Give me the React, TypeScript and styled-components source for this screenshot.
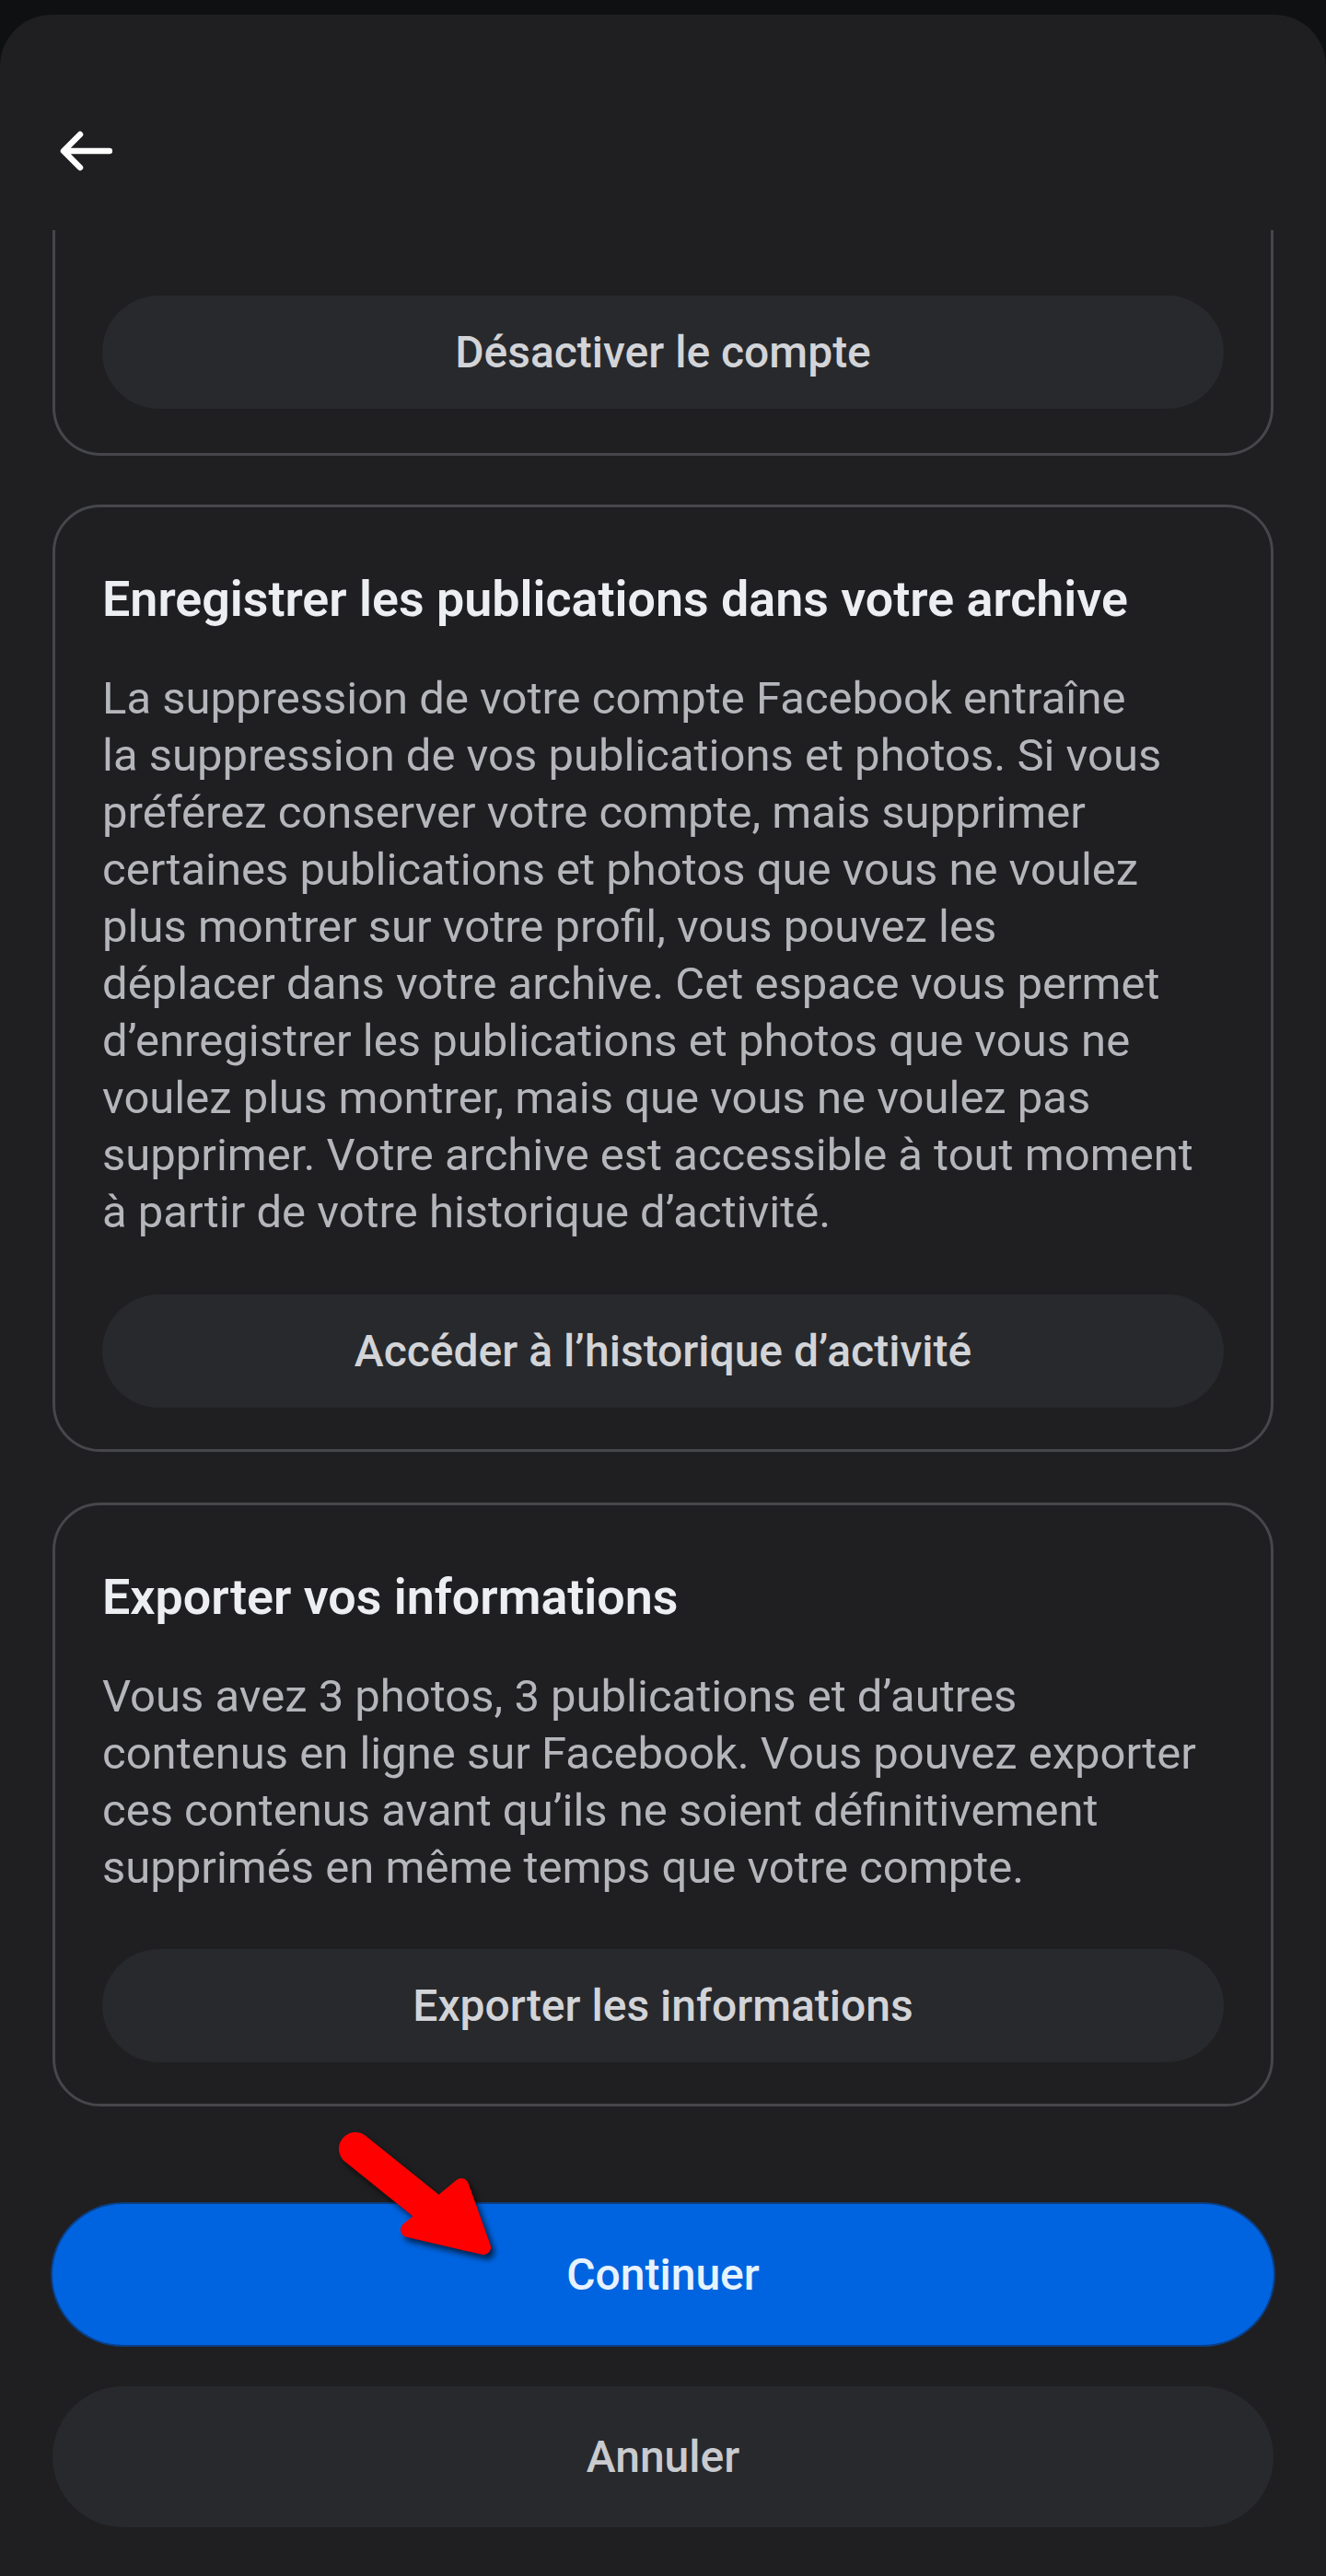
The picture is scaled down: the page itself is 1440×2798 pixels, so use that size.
import React from "react";
import styled, { createGlobalStyle } from "styled-components";

const GlobalStyle = createGlobalStyle`
  html, body {
    margin: 0;
    padding: 0;
    background: #0f1012;
  }
  body {
    font-family: Roboto, "Noto Sans", "Liberation Sans", sans-serif;
    -webkit-font-smoothing: antialiased;
  }
`;

const Page = styled.div`
  position: relative;
  width: 1440px;
  height: 2798px;
  overflow: hidden;
  padding-top: 16px;
  box-sizing: border-box;
`;

const Sheet = styled.div`
  background: #1f1f21;
  border-radius: 56px 56px 0 0;
  height: 2782px;
  display: flex;
  flex-direction: column;
`;

const Header = styled.div`
  height: 234px;
  box-sizing: border-box;
  padding: 126px 0 0 64px;
  flex-shrink: 0;
`;

const BackButton = styled.button`
  background: none;
  border: 0;
  padding: 0;
  width: 58px;
  height: 44px;
  display: flex;
  cursor: pointer;
`;

const Content = styled.div`
  padding: 0 57px;
  display: flex;
  flex-direction: column;
`;

const Card = styled.section<{ $clipped?: boolean }>`
  border: 3px solid #46474b;
  border-radius: 52px;
  padding: 69px 51px 45px;
  display: flex;
  flex-direction: column;
  margin-bottom: 55px;

  ${(p) =>
    p.$clipped &&
    `
    border-top: none;
    border-radius: 0 0 52px 52px;
    padding-top: 71px;
    padding-bottom: 48px;
    margin-bottom: 53px;
  `}
`;

const Title = styled.h2`
  margin: 0;
  font-size: 53.8px;
  line-height: 62px;
  font-weight: 600;
  color: #eceef1;
  white-space: nowrap;
`;

const Body = styled.p`
  margin: 46px 0 0;
  font-size: 49px;
  line-height: 62px;
  font-weight: 400;
  color: #b4b6bb;
  white-space: nowrap;
`;

const Pill = styled.button<{ $variant?: "ghost" | "primary" | "secondary"; $top?: number }>`
  width: 100%;
  border: 0;
  border-radius: 80px;
  font-family: inherit;
  font-size: 48px;
  font-weight: 500;
  cursor: pointer;
  margin-top: ${(p) => p.$top ?? 0}px;
  flex-shrink: 0;
  height: ${(p) => (p.$variant === "ghost" ? 123 : 153)}px;
  background: ${(p) =>
    p.$variant === "primary" ? "#0064e0" : p.$variant === "secondary" ? "#28292d" : "#28292c"};
  color: ${(p) =>
    p.$variant === "primary" ? "#e6f3ff" : p.$variant === "secondary" ? "#c9cbcf" : "#d2d4d8"};
  box-shadow: ${(p) =>
    p.$variant === "primary" ? "0 0 0 2px #0b3f86" : "none"};
`;

const Footer = styled.div`
  margin-top: 51px;
  display: flex;
  flex-direction: column;
  gap: 45px;
`;

const Annotation = styled.svg`
  position: absolute;
  left: 350px;
  top: 2300px;
  width: 210px;
  height: 180px;
  overflow: visible;
  filter: drop-shadow(4px 5px 3px rgba(0, 0, 0, 0.65));
`;

const BackArrow = () => (
  <svg width="58" height="44" viewBox="0 0 58 44" fill="none">
    <path
      d="M55 22H6M23 4L5 22l18 18"
      stroke="#ffffff"
      strokeWidth="6.5"
      strokeLinecap="round"
      strokeLinejoin="round"
    />
  </svg>
);

export default function App() {
  return (
    <>
      <GlobalStyle />
      <Page>
        <Sheet>
          <Header>
            <BackButton aria-label="Retour">
              <BackArrow />
            </BackButton>
          </Header>

          <Content>
            <Card $clipped>
              <Pill $variant="ghost">Désactiver le compte</Pill>
            </Card>

            <Card>
              <Title>Enregistrer les publications dans votre archive</Title>
              <Body>
                La suppression de votre compte Facebook entraîne
                <br />
                la suppression de vos publications et photos. Si vous
                <br />
                préférez conserver votre compte, mais supprimer
                <br />
                certaines publications et photos que vous ne voulez
                <br />
                plus montrer sur votre profil, vous pouvez les
                <br />
                déplacer dans votre archive. Cet espace vous permet
                <br />
                d’enregistrer les publications et photos que vous ne
                <br />
                voulez plus montrer, mais que vous ne voulez pas
                <br />
                supprimer. Votre archive est accessible à tout moment
                <br />
                à partir de votre historique d’activité.
              </Body>
              <Pill $variant="ghost" $top={58}>
                Accéder à l’historique d’activité
              </Pill>
            </Card>

            <Card>
              <Title>Exporter vos informations</Title>
              <Body>
                Vous avez 3 photos, 3 publications et d’autres
                <br />
                contenus en ligne sur Facebook. Vous pouvez exporter
                <br />
                ces contenus avant qu’ils ne soient définitivement
                <br />
                supprimés en même temps que votre compte.
              </Body>
              <Pill $variant="ghost" $top={57}>
                Exporter les informations
              </Pill>
            </Card>

            <Footer>
              <Pill $variant="primary">Continuer</Pill>
              <Pill $variant="secondary">Annuler</Pill>
            </Footer>
          </Content>
        </Sheet>

        <Annotation viewBox="0 0 210 180">
          <line
            x1="36"
            y1="34"
            x2="118"
            y2="100"
            stroke="#ff0000"
            strokeWidth="36"
            strokeLinecap="round"
          />
          <polygon
            points="93,122 151,74 175,141"
            fill="#ff0000"
            stroke="#ff0000"
            strokeWidth="16"
            strokeLinejoin="round"
          />
        </Annotation>
      </Page>
    </>
  );
}
